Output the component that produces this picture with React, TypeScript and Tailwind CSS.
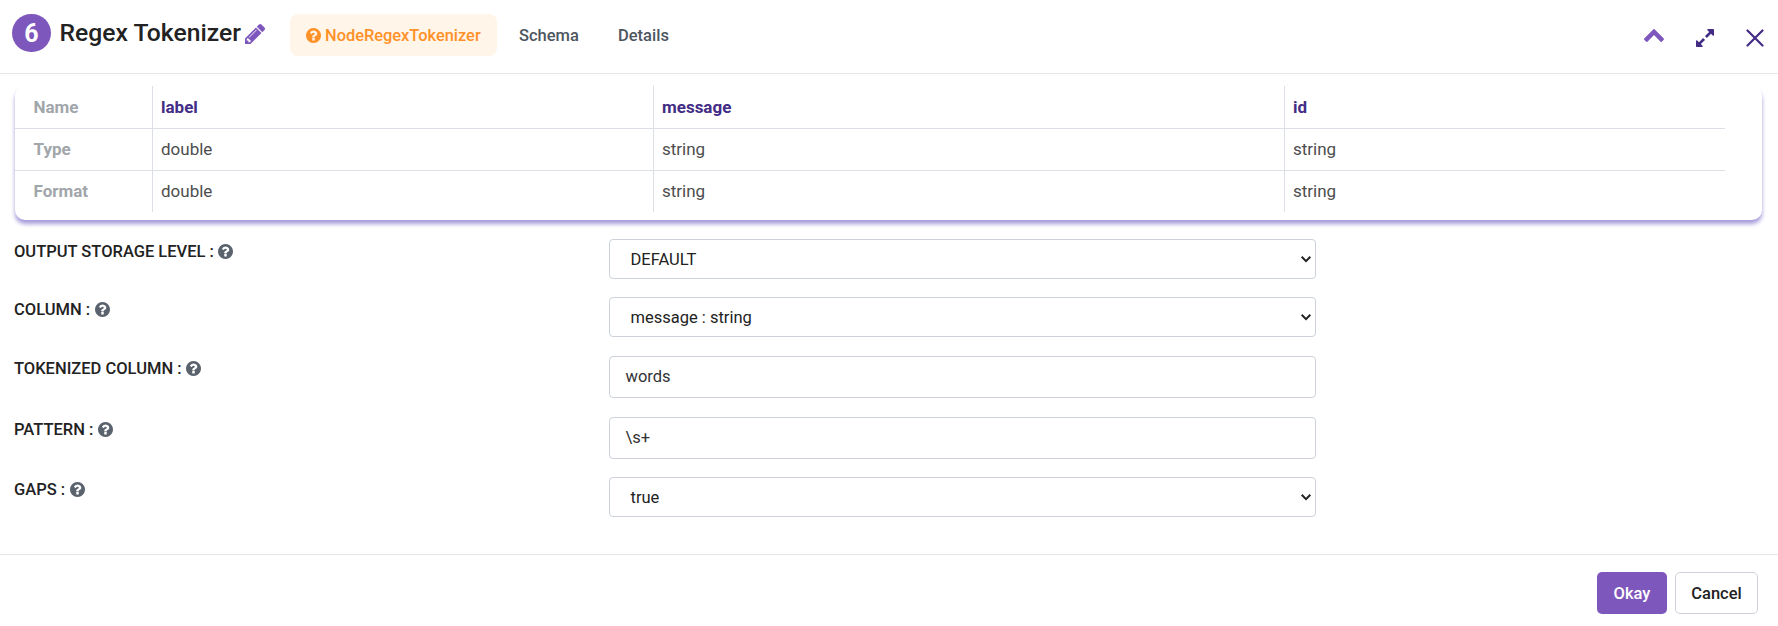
import React from "react";

const ICONS = {
  question: {
    box: "128 128 1536 1536",
    path: "M1024 1376v-192q0-14-9-23t-23-9h-192q-14 0-23 9t-9 23v192q0 14 9 23t23 9h192q14 0 23-9t9-23zm256-672q0-88-55.5-163t-138.5-116-170-41q-243 0-371 213-15 24 8 42l132 100q7 6 19 6 16 0 25-12 53-68 86-92 34-24 86-24 48 0 85.5 26t37.5 59q0 38-20 61t-68 45q-63 28-115.5 86.5t-52.5 125.5v36q0 14 9 23t23 9h192q14 0 23-9t9-23q0-19 21.5-49.5t54.5-49.5q32-18 49-28.5t46-35 44.5-48 28-60.5 12.5-81zm384 192q0 209-103 385.5t-279.5 279.5-385.5 103-385.5-103-279.5-279.5-103-385.5 103-385.5 279.5-279.5 385.5-103 385.5 103 279.5 279.5 103 385.5z",
  },
  pencil: {
    box: "128 149 1515 1515",
    path: "M491 1536l91-91-235-235-91 91v107h128v128h107zm523-928q0-22-22-22-10 0-17 7l-542 542q-7 7-7 17 0 22 22 22 10 0 17-7l542-542q7-7 7-17zm-54-192l416 416-832 832h-416v-416zm683 96q0 53-37 90l-166 166-416-416 166-165q36-38 90-38 53 0 91 38l235 234q37 39 37 91z",
  },
  chevronUp: {
    box: "90 480 1612 1035",
    path: "M1683 1331l-166 165q-19 19-45 19t-45-19l-531-531-531 531q-19 19-45 19t-45-19l-166-165q-19-19-19-45.5t19-45.5l742-741q19-19 45-19t45 19l742 741q19 19 19 45.5t-19 45.5z",
  },
  expand: {
    box: "128 128 1536 1536",
    path: "M883 1056q0 13-10 23l-332 332 144 144q19 19 19 45t-19 45-45 19h-448q-26 0-45-19t-19-45v-448q0-26 19-45t45-19 45 19l144 144 332-332q10-10 23-10t23 10l114 114q10 10 10 23zm781-864v448q0 26-19 45t-45 19-45-19l-144-144-332 332q-10 10-23 10t-23-10l-114-114q-10-10-10-23t10-23l332-332-144-144q-19-19-19-45t19-45 45-19h448q26 0 45 19t19 45z",
  },
};

function Icon({ name, className }: { name: keyof typeof ICONS; className: string }) {
  return (
    <svg viewBox={ICONS[name].box} fill="currentColor" className={`shrink-0 ${className}`}>
      <path d={ICONS[name].path} />
    </svg>
  );
}

const rows = [
  { head: "Name", cells: ["label", "message", "id"], size: "h-[43px]" },
  { head: "Type", cells: ["double", "string", "string"], size: "h-[42px]" },
  { head: "Format", cells: ["double", "string", "string"], size: "h-[41px]" },
];

function SchemaTable() {
  return (
    <section className="ml-[15px] h-[134px] w-[1747px] rounded-[10px] bg-white text-[17px] shadow-[0_4px_4px_#a69ddb]">
      <div className="w-[1710px]">
        {rows.map((row, i) => (
          <div key={row.head} className={`grid grid-cols-[137px_501px_631px_441px] ${row.size}`}>
            <div
              className={`pl-[18.5px] font-bold text-[#a1a6ab] ${i === 0 ? "pt-[9px]" : "pt-2"} ${
                i < 2 ? "border-b border-[#dcdfe6]" : ""
              }`}
            >
              {row.head}
            </div>
            {row.cells.map((cell, j) => (
              <div
                key={j}
                className={`border-l border-[#dcdfe6] pl-2 ${i < 2 ? "border-b" : ""} ${
                  i === 0 ? "pt-[9px] font-bold text-[#432c85]" : "pt-2 text-[#4d4d4d]"
                }`}
              >
                {cell}
              </div>
            ))}
          </div>
        ))}
      </div>
    </section>
  );
}

function Label({ text }: { text: string }) {
  return (
    <div className="flex h-6 w-[595px] items-center gap-[4.5px] font-medium text-[#222]">
      <span className="pt-0.5">{text} :</span>
      <Icon name="question" className="size-[15px] text-[#5a636d]" />
    </div>
  );
}

function SelectField({ value }: { value: string }) {
  return (
    <div className="flex h-10 w-[707px] items-center justify-between rounded-[4px] border border-[#cdd2da] pl-[20.5px] pr-1 text-[#222]">
      <span className="pt-0.5">{value}</span>
      <svg width="10" height="7" viewBox="0 0 10 7" fill="none" stroke="#222" strokeWidth="2">
        <path d="M0.7 0.8 L5 5.1 L9.3 0.8" />
      </svg>
    </div>
  );
}

function TextField({ value }: { value: string }) {
  return (
    <div className="flex h-[42px] w-[707px] items-center rounded-[4px] border border-[#cdd2da] pl-[15.5px] text-[#333]">
      {value}
    </div>
  );
}

export default function App() {
  return (
    <div className="flex h-[626px] w-[1778px] flex-col overflow-hidden bg-white font-['Roboto',sans-serif] text-[16.5px] leading-6 text-[#222]">
      <header className="flex h-[74px] shrink-0 items-start border-b border-[#e7e7e9]">
        <div className="ml-3 mt-[14px] flex h-[38px] w-[39px] items-center justify-center rounded-full bg-[#7e57bd] pt-0.5 text-[25px] font-bold text-white">
          6
        </div>
        <h1 className="ml-[8.5px] mt-[17px] w-[181.5px] whitespace-nowrap text-[24.7px] font-medium leading-[32px]">
          Regex Tokenizer
        </h1>
        <Icon name="pencil" className="ml-1 mt-6 size-5 text-[#7e57bd]" />
        <nav className="ml-[25px] mt-[14px] flex h-[42px] items-center font-medium text-[#4d565f]">
          <div className="flex h-[42px] w-[207px] items-center gap-1 rounded-[8px] bg-[#fff5e8] pl-4 text-[16.4px] text-[#ff9129]">
            <Icon name="question" className="size-[15px]" />
            <span className="pt-0.5">NodeRegexTokenizer</span>
          </div>
          <span className="ml-[22px] w-[99px] pt-0.5">Schema</span>
          <span className="pt-0.5">Details</span>
        </nav>
        <div className="ml-auto flex pr-[14px]">
          <Icon name="chevronUp" className="mt-[29px] h-[13px] w-5 text-[#7e57bd]" />
          <Icon name="expand" className="ml-[31.5px] mr-[0.5px] mt-[29px] size-[18px] text-[#432c85]" />
          <svg className="ml-[32px] mt-[29px]" width="18" height="18" viewBox="0 0 18 18" fill="none" stroke="#432c85" strokeWidth="2.2" strokeLinecap="round">
            <path d="M1.5 1.5 L16.5 16.5 M16.5 1.5 L1.5 16.5" />
          </svg>
        </div>
      </header>
      <main className="h-[480px] shrink-0 pt-3">
        <SchemaTable />
        <div className="ml-[14px] mt-[19px] flex flex-col">
          <div className="flex h-[58px]"><Label text="OUTPUT STORAGE LEVEL" /><SelectField value="DEFAULT" /></div>
          <div className="flex h-[59px]"><Label text="COLUMN" /><SelectField value="message : string" /></div>
          <div className="flex h-[61px]"><Label text="TOKENIZED COLUMN" /><TextField value="words" /></div>
          <div className="flex h-[60px]"><Label text="PATTERN" /><TextField value="\s+" /></div>
          <div className="flex h-[60px]"><Label text="GAPS" /><SelectField value="true" /></div>
        </div>
      </main>
      <footer className="flex h-[72px] shrink-0 justify-end gap-2 border-t border-[#e7e7e9] pr-5 pt-[17px] font-medium">
        <button className="h-[42px] w-[70px] rounded-[5px] bg-[#7e57bd] pt-0.5 text-white">Okay</button>
        <button className="h-[42px] w-[83px] rounded-[5px] border border-[#cdd2da] pt-0.5 text-[#222]">Cancel</button>
      </footer>
    </div>
  );
}
